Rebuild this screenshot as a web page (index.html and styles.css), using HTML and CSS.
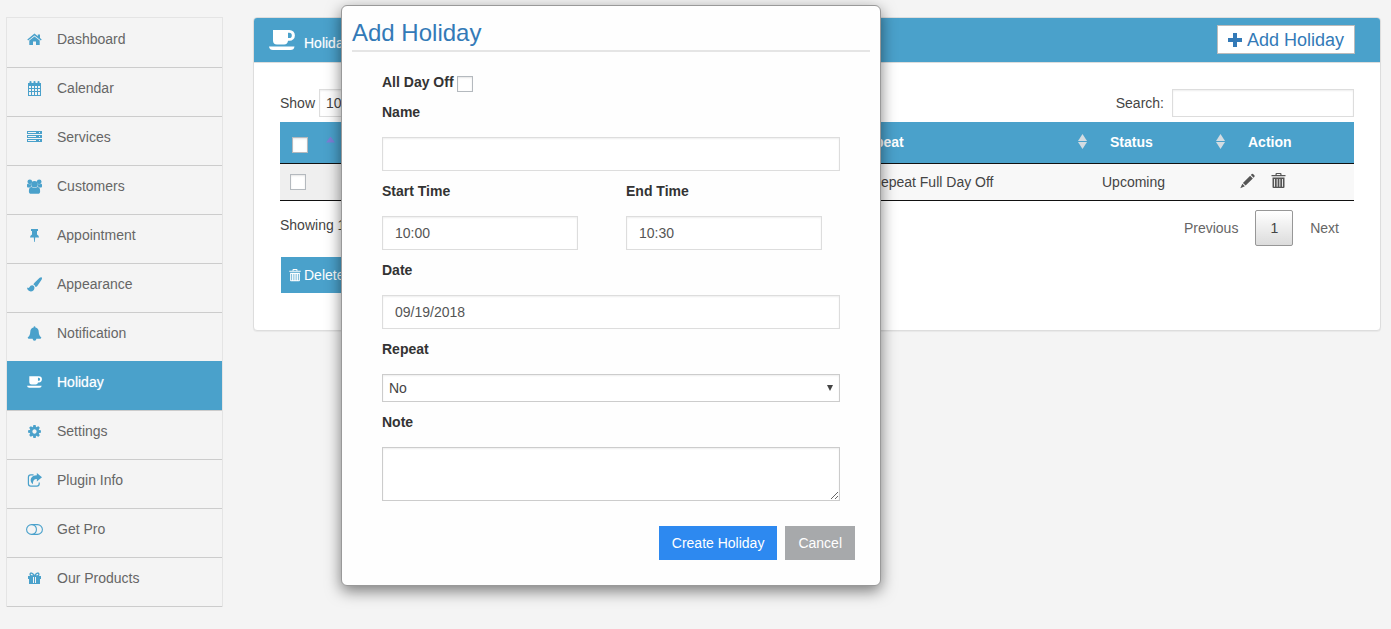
FILE: index.html
```html
<!DOCTYPE html>
<html lang="en">
<head>
<meta charset="utf-8">
<title>Holiday</title>
<link rel="stylesheet" href="styles.css">
</head>
<body>
<svg class="sprite" aria-hidden="true">
  <symbol id="cup" viewBox="0 0 26 20">
    <path fill-rule="evenodd" d="M4 0H20.5A5.200 5.200 0 0 1 20.5 10.800H19A4 4 0 0 1 15 14.500H8A4 4 0 0 1 4 10.500ZM19 2.800V8H20.200A2.600 2.600 0 0 0 20.200 2.800ZM0 16.500H25.500Q25 20 21.500 20H4Q.5 20 0 16.500Z"/>
  </symbol>
  <symbol id="trash" viewBox="0 0 14 16">
    <path fill-rule="evenodd" d="M4 2V1Q4 0 5 0H9Q10 0 10 1V2H14V3.300H0V2ZM5.200 2H8.800V1.100H5.200ZM1 4.500H13V14Q13 15 12 15H2Q1 15 1 14ZM2.500 6V13.700H3.400V6ZM5.200 6V13.700H6.100V6ZM7.900 6V13.700H8.800V6ZM10.600 6V13.700H11.500V6Z"/>
  </symbol>
</svg>
<div class="page">
  <nav class="sidebar">
    <ul class="menu">
      <li><a class="menu-link" href="#"><svg class="icon" viewBox="0 0 15 15"><path d="M7.500 1.500L10.800 4.200V2.500H13V6L14.700 7.500L13.900 8.500L7.500 3.400L1.100 8.500L.3 7.500ZM7.500 4.400L12.700 8.600V13H9V9.500H6V13H2.300V8.600Z"/></svg>Dashboard</a></li>
      <li><a class="menu-link" href="#"><svg class="icon" viewBox="0 0 15 15"><path fill-rule="evenodd" d="M1 2H2.500V.8Q2.500 0 3.500 0T4.500.8V2H6.500V.8Q6.500 0 7.500 0T8.500.8V2H10.500V.8Q10.500 0 11.500 0T12.500.8V2H14V15H1ZM2 5V7H4V5ZM5 5V7H7V5ZM8 5V7H10V5ZM11 5V7H13V5ZM2 8V10H4V8ZM5 8V10H7V8ZM8 8V10H10V8ZM11 8V10H13V8ZM2 11V14H4V11ZM5 11V14H7V11ZM8 11V14H10V11ZM11 11V14H13V11Z"/></svg>Calendar</a></li>
      <li><a class="menu-link" href="#"><svg class="icon" viewBox="0 0 15 15"><path fill-rule="evenodd" d="M0 1H15V4H0ZM1 2V3H9V2ZM12 2V3H13V2ZM0 5H15V8H0ZM1 6V7H9V6ZM12 6V7H13V6ZM0 9H15V12H0ZM1 10V11H9V10ZM12 10V11H13V10Z"/></svg>Services</a></li>
      <li><a class="menu-link" href="#"><svg class="icon" viewBox="0 0 16 16"><circle cx="3" cy="3" r="2.500"/><circle cx="13" cy="3" r="2.500"/><circle cx="8" cy="5.500" r="3.500"/><path d="M0 8V6.500Q0 4.800 1.500 5.200Q3 6 4.200 5.300Q4.200 7 5 8Q3.500 8.200 3 9H1Q0 9 0 8ZM16 8V6.500Q16 4.800 14.500 5.200Q13 6 11.800 5.300Q11.800 7 11 8Q12.500 8.200 13 9H15Q16 9 16 8ZM5 8.500Q8 10.500 11 8.500Q14 8.500 14 13Q14 15.800 11.500 15.800H4.500Q2 15.800 2 13Q2 8.500 5 8.500Z"/></svg>Customers</a></li>
      <li><a class="menu-link" href="#"><svg class="icon" viewBox="0 0 15 15"><path fill-rule="evenodd" d="M4 1H11V3H10V6.500Q12 7.500 12 9.500H8.200L7.800 14H7.200L6.800 9.500H3Q3 7.500 5 6.500V3H4Z"/></svg>Appointment</a></li>
      <li><a class="menu-link" href="#"><svg class="icon" viewBox="0 0 16 16"><path d="M15.500.3Q16.500 1 15.500 3L11 9.500Q10 10.700 8.800 10.500Q8.500 8.500 6.800 8Q7 7 8 6L13.500.8Q14.800-.1 15.500.3ZM5.800 8.800Q8 9.200 8 11.500Q7.500 15.500 4 15.500Q.5 15.300 0 11.300Q1.500 12.400 2.600 11Q3.500 8.600 5.800 8.800Z"/></svg>Appearance</a></li>
      <li><a class="menu-link" href="#"><svg class="icon" viewBox="0 0 16 16"><path d="M7 1.500Q7 .3 8 .3T9 1.500Q12.500 2.300 12.500 6Q12.700 10.500 15.300 12.200Q15 13.500 14 13.500H10Q10 15.700 8 15.700T6 13.500H2Q1 13.500.7 12.200Q3.300 10.500 3.500 6Q3.500 2.300 7 1.500Z"/></svg>Notification</a></li>
      <li><a class="menu-link active" href="#" aria-current="page"><svg class="icon"><use href="#cup"/></svg>Holiday</a></li>
      <li><a class="menu-link" href="#"><svg class="icon" viewBox="0 0 1792 1792"><path d="M1152 896q0-106-75-181t-181-75-181 75-75 181 75 181 181 75 181-75 75-181zm512-109v222q0 12-8 23t-20 13l-185 28q-19 54-39 91 35 50 107 138 10 12 10 25t-9 23q-27 37-99 108t-94 71q-12 0-26-9l-138-108q-44 23-91 38-16 136-29 186-7 28-36 28h-222q-14 0-24.500-8.500t-11.500-21.500l-28-184q-49-16-90-37l-141 107q-10 9-25 9-14 0-25-11-126-114-165-168-7-10-7-23 0-12 8-23 15-21 51-66.500t54-70.500q-27-50-41-99l-183-27q-13-2-21-12.500t-8-23.500v-222q0-12 8-23t19-13l186-28q14-46 39-92-40-57-107-138-10-12-10-24 0-10 9-23 26-36 98.500-107.500t94.500-71.500q13 0 26 10l138 107q44-23 91-38 16-136 29-186 7-28 36-28h222q14 0 24.500 8.500t11.500 21.500l28 184q49 16 90 37l142-107q9-9 24-9 13 0 25 10 129 119 165 170 7 8 7 22 0 12-8 23-15 21-51 66.500t-54 70.500q26 50 41 98l183 28q13 2 21 12.500t8 23.500z"/></svg>Settings</a></li>
      <li><a class="menu-link" href="#"><svg class="icon" viewBox="0 0 16 16"><path d="M7 2H4Q1.500 2 1.500 4.500V11.500Q1.500 14 4 14H10.500Q13 14 13 11.500V10" fill="none" stroke="currentColor" stroke-width="1.300"/><path d="M10.500 0L16 4.500L10.500 9V6.300Q6 6.200 6.300 12Q3 9 4.200 5.800Q6 2.500 10.500 2.500Z"/></svg>Plugin Info</a></li>
      <li><a class="menu-link" href="#"><svg class="icon wide" viewBox="0 0 17 15"><g fill="none" stroke="currentColor" stroke-width="1.100"><rect x=".6" y="2.600" width="15.800" height="9.800" rx="4.900"/><path d="M6.500 2.700A4.900 4.900 0 0 1 6.500 12.300"/></g></svg>Get Pro</a></li>
      <li><a class="menu-link" href="#"><svg class="icon" viewBox="0 0 15 15"><path fill-rule="evenodd" d="M1 5H14V8H13V13H2V8H1ZM6 6V12H7V6ZM8 6V12H9V6Z"/><path d="M7.500 4.800L5.800 2.800Q4.200 1.300 3.200 2.700Q2.700 4.500 4.500 4.800ZM7.500 4.800L9.200 2.800Q10.800 1.300 11.800 2.700Q12.300 4.500 10.500 4.800Z" fill="none" stroke="currentColor" stroke-width="1.300"/></svg>Our Products</a></li>
    </ul>
  </nav>
  <main class="main">
    <section class="panel">
      <header class="panel-head">
        <h1 class="panel-title"><svg class="cup-icon"><use href="#cup"/></svg>Holiday</h1>
        <button class="add-btn" type="button"><svg class="plus-icon" viewBox="0 0 16 16"><path d="M6 1H10V6H15V10H10V15H6V10H1V6H6Z"/></svg>Add Holiday</button>
      </header>
      <div class="panel-body">
        <div class="tools">
          <label class="tool">Show <select class="length"><option>10</option></select></label>
          <label class="tool">Search: <input class="search" type="search"></label>
        </div>
        <table class="grid">
          <colgroup><col class="c-check"><col><col><col class="c-repeat"><col class="c-status"><col class="c-action"></colgroup>
          <thead>
            <tr>
              <th class="check-head"><div class="head"><input class="tick" type="checkbox" aria-label="Select all"><span class="sort-up"></span></div></th>
              <th>Name</th>
              <th>Date</th>
              <th><div class="head">Repeat<span class="sort"></span></div></th>
              <th><div class="head">Status<span class="sort"></span></div></th>
              <th>Action</th>
            </tr>
          </thead>
          <tbody>
            <tr>
              <td class="sorted"><input class="tick" type="checkbox" aria-label="Select row"></td>
              <td></td>
              <td></td>
              <td>No Repeat Full Day Off</td>
              <td>Upcoming</td>
              <td>
                <div class="actions">
                  <button class="icon-btn" type="button" aria-label="Edit"><svg class="row-icon" viewBox="0 0 16 16"><path d="M10.800 2.300L13.700 5.200L6 12.900L3.100 10ZM11.600 1.500L12.500.6Q13.400 0 14.200.8L15.300 1.800Q16 2.600 15.400 3.500L14.500 4.400ZM2.500 10.800L5.200 13.500L.3 15.700Z"/></svg></button>
                  <button class="icon-btn" type="button" aria-label="Delete"><svg class="row-icon"><use href="#trash"/></svg></button>
                </div>
              </td>
            </tr>
          </tbody>
        </table>
        <div class="foot">
          <p class="info">Showing 1 to 1</p>
          <div class="pager">
            <button class="page-btn" type="button">Previous</button>
            <button class="page-btn current" type="button">1</button>
            <button class="page-btn" type="button">Next</button>
          </div>
        </div>
        <button class="delete-btn" type="button"><svg class="trash-icon"><use href="#trash"/></svg>Delete</button>
      </div>
    </section>
    <form class="modal" role="dialog" aria-labelledby="modal-title">
      <h2 class="modal-title" id="modal-title">Add Holiday</h2>
      <div class="fields">
        <div class="check-row"><label for="all-day">All Day Off</label><input class="tick" type="checkbox" id="all-day"></div>
        <div class="field"><label for="name">Name</label><input class="box" type="text" id="name"></div>
        <div class="times">
          <div class="field"><label for="start">Start Time</label><input class="box" type="text" id="start" value="10:00"></div>
          <div class="field"><label for="end">End Time</label><input class="box" type="text" id="end" value="10:30"></div>
        </div>
        <div class="field"><label for="date">Date</label><input class="box" type="text" id="date" value="09/19/2018"></div>
        <div class="field"><label for="repeat">Repeat</label><div class="select-wrap"><select class="choice" id="repeat"><option>No</option></select></div></div>
        <div class="field"><label for="note">Note</label><textarea class="note" id="note"></textarea></div>
      </div>
      <div class="buttons">
        <button class="btn primary" type="submit">Create Holiday</button>
        <button class="btn" type="button">Cancel</button>
      </div>
    </form>
  </main>
</div>
</body>
</html>
```
FILE: styles.css
```css
*, *::before, *::after { box-sizing: border-box; }

body {
  margin: 0;
  background: #f4f4f4;
  color: #444;
  font: 14px/20px "Liberation Sans", Arial, sans-serif;
}

button, input, select, textarea { font: inherit; color: inherit; margin: 0; }
svg { fill: currentColor; display: block; flex: none; }
.sprite { position: absolute; width: 0; height: 0; }

.page {
  display: flex;
  align-items: flex-start;
  gap: 30px;
  padding: 17px 10px 20px 6px;
}

/* Sidebar */
.sidebar { flex: 0 0 217px; }
.menu {
  list-style: none;
  margin: 0;
  padding: 0;
  border: 1px solid #e4e4e4;
  border-bottom: 0;
}
.menu-link {
  display: flex;
  align-items: center;
  gap: 15px;
  padding: 10px 20px 18px;
  border-top: 1px solid transparent;
  border-bottom: 1px solid #ccc;
  color: #666;
  text-decoration: none;
}
.menu li + li { margin-top: -1px; }
.icon { width: 15px; height: 15px; color: #4aa1cb; }
.icon.wide { width: 17px; margin: 0 -1px; }
.menu-link.active {
  position: relative;
  background: #4aa1cb;
  border-top-color: #4aa1cb;
  color: #fff;
  text-shadow: 0 0 1px rgba(255, 255, 255, .6);
}
.active .icon { color: #fff; height: 12px; }

/* Panel */
.main { position: relative; flex: 1; min-width: 0; }
.panel {
  background: #fff;
  border: 1px solid #ddd;
  border-radius: 4px;
  box-shadow: 0 1px 1px rgba(0, 0, 0, .05);
}
.panel-head {
  display: flex;
  align-items: center;
  justify-content: space-between;
  height: 45px;
  padding: 0 25px 0 15px;
  background: #4aa1cb;
  border-bottom: 1px solid #ddd;
  border-radius: 3px 3px 0 0;
}
.panel-title {
  display: flex;
  align-items: center;
  gap: 9px;
  margin: 0;
  padding-top: 5px;
  color: #fff;
  font-size: 14px;
  font-weight: normal;
  text-shadow: 0 0 1px rgba(255, 255, 255, .4);
}
.cup-icon { width: 26px; height: 20px; margin-bottom: 5px; }
.add-btn {
  display: flex;
  align-items: center;
  gap: 4px;
  height: 29px;
  margin-bottom: 1px;
  padding: 0 10px 0 9px;
  border: 1px solid #bbb;
  background: #fff;
  color: #337ab7;
  font-size: 18px;
}
.plus-icon { width: 16px; height: 16px; }
.panel-body { padding: 26px 26px 37px; }

.tools { display: flex; justify-content: space-between; }
.tool { display: flex; align-items: center; gap: 4px; }
.tool:last-child { gap: 8px; }
.length, .search, .box, .choice, .note {
  border: 1px solid #ddd;
  border-radius: 0;
  background: #fff;
  box-shadow: inset 0 1px 2px rgba(0, 0, 0, .07);
}
.length { width: 60px; height: 28px; padding: 0 2px; }
.search { width: 182px; height: 28px; }

.grid {
  width: 100%;
  margin: 5px 0 9px;
  table-layout: fixed;
  border-collapse: separate;
  border-spacing: 0;
}
.c-check { width: 64px; }
.c-repeat { width: 253px; }
.c-status { width: 138px; }
.c-action { width: 124px; }
.grid th {
  height: 42px;
  padding: 0 5px 2px 18px;
  background: #4aa1cb;
  border-bottom: 1px solid #111;
  color: #fff;
  text-align: left;
}
.grid th.check-head { padding-left: 12px; padding-top: 6px; }
.head { display: flex; align-items: center; justify-content: space-between; }
.grid td {
  height: 37px;
  padding: 0 10px;
  background: #f8f8f8;
  border-bottom: 1px solid #111;
}
.grid td.sorted { background: #efefef; }
.tick {
  appearance: none;
  display: block;
  width: 16px;
  height: 16px;
  border: 1px solid #b4b9be;
  background: #fff;
  box-shadow: inset 0 1px 2px rgba(0, 0, 0, .1);
}
.sort { display: grid; gap: 1px; }
.sort::before, .sort::after {
  content: "";
  width: 9px;
  height: 7px;
  background: #d3dce2;
  clip-path: polygon(50% 0, 100% 100%, 0 100%);
}
.sort::after { clip-path: polygon(0 0, 100% 0, 50% 100%); }
.sort-up {
  width: 9px;
  height: 6px;
  margin: 0 4px 10px 0;
  background: #7b7fd6;
  clip-path: polygon(50% 0, 100% 100%, 0 100%);
}
.actions { display: flex; gap: 16px; padding-bottom: 2px; }
.icon-btn { padding: 0; border: 0; background: none; color: #555; }
.row-icon { width: 15px; height: 16px; }

.foot { display: flex; justify-content: space-between; align-items: flex-start; }
.info { margin: 0; padding-top: 5px; }
.pager { display: flex; gap: 2px; }
.page-btn {
  height: 36px;
  padding: 0 14px;
  border: 1px solid transparent;
  border-radius: 2px;
  background: none;
  color: #666;
}
.page-btn.current {
  border-color: #979797;
  background: linear-gradient(#fff, #dcdcdc);
  color: #444;
}
.delete-btn {
  display: flex;
  align-items: center;
  gap: 3px;
  height: 36px;
  margin: 11px 0 0 1px;
  padding: 0 8px;
  border: 0;
  background: #4aa1cb;
  color: #fff;
}
.trash-icon { width: 12px; height: 13px; }

/* Dialog laid over the panel */
.modal {
  position: absolute;
  top: -12px;
  left: 88px;
  width: 540px;
  padding: 10px 10px 25px;
  border: 1px solid #999;
  border-radius: 6px;
  background: #fefefe;
  box-shadow: 0 5px 15px rgba(0, 0, 0, .5);
  color: #333;
}
.modal-title {
  margin: 0;
  border-bottom: 2px solid #e5e5e5;
  color: #337ab7;
  font-size: 24px;
  font-weight: normal;
  line-height: 34px;
}
.fields { display: grid; gap: 10px; padding: 20px 30px 0; }
.fields label { font-weight: bold; }
.field { display: grid; gap: 15px; }
.check-row { display: flex; align-items: center; gap: 3px; height: 20px; }
.check-row .tick { margin-top: 4px; }
.times {
  display: grid;
  grid-template-columns: 1fr 1fr;
  gap: 48px;
  padding-right: 18px;
}
.box { width: 100%; height: 34px; padding: 0 12px; color: #555; }
.select-wrap { position: relative; }
.select-wrap::after {
  content: "";
  position: absolute;
  top: 11px;
  right: 7px;
  width: 6px;
  height: 6px;
  background: #444;
  clip-path: polygon(0 0, 100% 0, 50% 100%);
  pointer-events: none;
}
.choice {
  appearance: none;
  display: block;
  width: 100%;
  height: 28px;
  padding: 0 6px;
  border-color: #ccc;
  color: #444;
}
.note { display: block; width: 100%; height: 54px; border-color: #ccc; resize: vertical; }
.buttons {
  display: flex;
  justify-content: flex-end;
  gap: 8px;
  padding: 25px 15px 0 0;
}
.btn {
  height: 34px;
  padding: 0 13px;
  border: 0;
  background: #a7a9ab;
  color: #fff;
}
.btn.primary { background: #2d89f0; }
```
